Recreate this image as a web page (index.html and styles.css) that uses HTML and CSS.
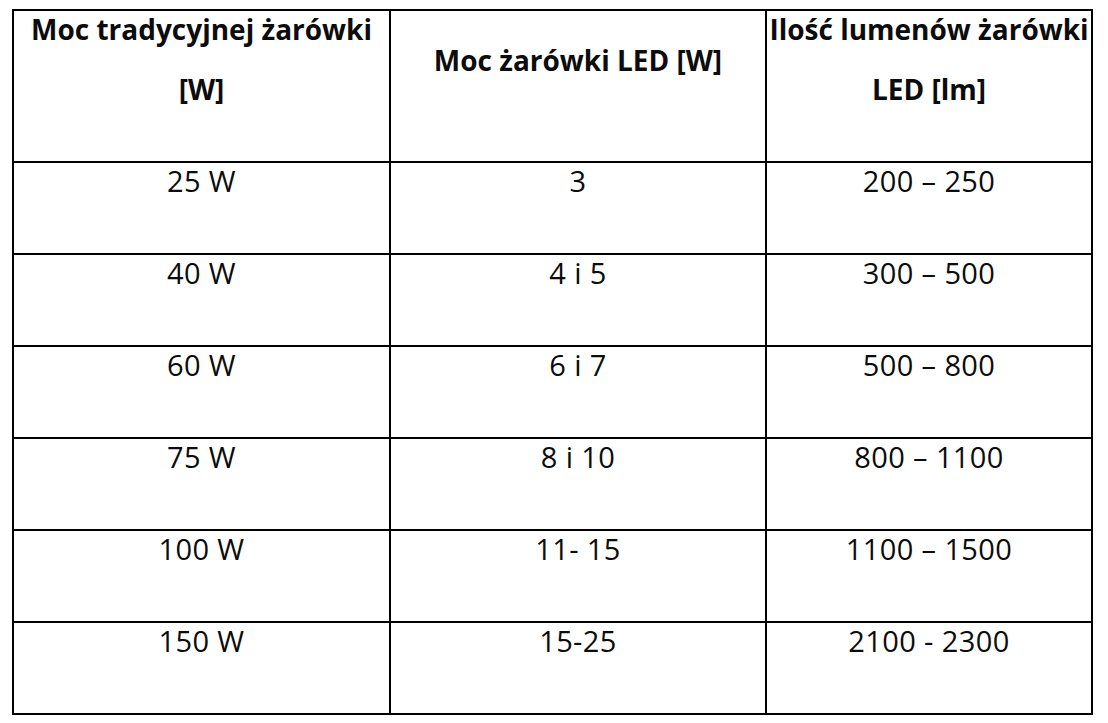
FILE: index.html
```html
<!DOCTYPE html>
<html lang="pl">
<head>
<meta charset="utf-8">
<title>Moc żarówek LED</title>
<link rel="stylesheet" href="styles.css">
</head>
<body>
<div class="table">
  <div class="cell head"><div class="head-text">Moc tradycyjnej żarówki<br>[W]</div></div>
  <div class="cell head"><div class="head-text single">Moc żarówki LED [W]</div></div>
  <div class="cell head"><div class="head-text">Ilość lumenów żarówki<br>LED [lm]</div></div>

  <div class="cell">25 W</div>
  <div class="cell">3</div>
  <div class="cell">200 – 250</div>

  <div class="cell">40 W</div>
  <div class="cell">4 i 5</div>
  <div class="cell">300 – 500</div>

  <div class="cell">60 W</div>
  <div class="cell">6 i 7</div>
  <div class="cell">500 – 800</div>

  <div class="cell">75 W</div>
  <div class="cell">8 i 10</div>
  <div class="cell">800 – 1100</div>

  <div class="cell">100 W</div>
  <div class="cell">11- 15</div>
  <div class="cell">1100 – 1500</div>

  <div class="cell">150 W</div>
  <div class="cell">15-25</div>
  <div class="cell">2100 - 2300</div>
</div>
</body>
</html>
```
FILE: styles.css
```css
html, body {
  margin: 0;
  padding: 0;
  background: #fff;
}

body {
  padding: 9px 0 0 12px;
  font-family: "Open Sans", "Liberation Sans", sans-serif;
  color: #0c0c0c;
}

.table {
  display: grid;
  grid-template-columns: 377px 376px 326px;
  grid-template-rows: 152px repeat(6, 92px);
  width: max-content;
  border-top: 2px solid #000;
  border-left: 2px solid #000;
}

.cell {
  border-right: 2px solid #000;
  border-bottom: 2px solid #000;
  text-align: center;
  font-size: 29px;
  letter-spacing: 0.4px;
  line-height: 35px;
}

.head {
  font-size: 28px;
  letter-spacing: 0;
  font-weight: 700;
}

.head-text {
  line-height: 60px;
  margin-top: -12px;
}

.head-text.single {
  margin-top: 19px;
}
```
